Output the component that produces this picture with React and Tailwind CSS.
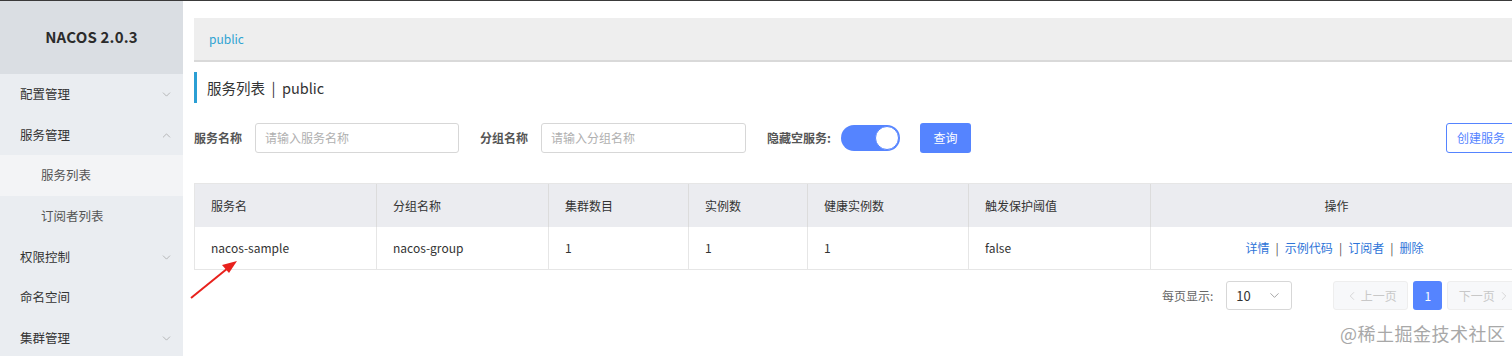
import { ChevronDown, ChevronUp, ChevronLeft, ChevronRight } from "lucide-react";

const font = { fontFamily: '"Noto Sans CJK SC", "Liberation Sans", sans-serif' };

const menu = [
  { label: "配置管理", arrow: "down" },
  { label: "服务管理", arrow: "up" },
  { label: "服务列表", sub: true, active: true },
  { label: "订阅者列表", sub: true },
  { label: "权限控制", arrow: "down" },
  { label: "命名空间" },
  { label: "集群管理", arrow: "down" },
];

const cols = [
  { title: "服务名", w: "w-[182px]", value: "nacos-sample" },
  { title: "分组名称", w: "w-[172px]", value: "nacos-group" },
  { title: "集群数目", w: "w-[140px]", value: "1" },
  { title: "实例数", w: "w-[119px]", value: "1" },
  { title: "健康实例数", w: "w-[161px]", value: "1" },
  { title: "触发保护阈值", w: "w-[182px]", value: "false" },
];

function Sidebar() {
  return (
    <div className="w-[183px] shrink-0 bg-[#eaedf1] h-[355px] flex flex-col">
      <div className="h-[73px] shrink-0 bg-[#dadee3] flex items-center justify-center text-[15px] font-bold text-[#2b2b2b] tracking-[0.2px]">
        NACOS 2.0.3
      </div>
      {menu.map((m) => (
        <div
          key={m.label}
          className={`h-[40.7px] shrink-0 flex items-center justify-between text-[12.5px] ${m.sub ? "pl-[41px] text-[#555]" : "pl-[20px] text-[#333]"} pr-[10px] ${m.active ? "bg-[#f3f4f6]" : ""}`}
        >
          <span>{m.label}</span>
          {m.arrow === "down" && <ChevronDown size={13} strokeWidth={1.2} className="text-[#999]" />}
          {m.arrow === "up" && <ChevronUp size={13} strokeWidth={1.2} className="text-[#999]" />}
        </div>
      ))}
    </div>
  );
}

function Main() {
  return (
    <div className="flex-1 overflow-hidden">
      <div className="w-[1340px] pl-[11px] pt-[17px]">
        <div className="h-[44px] bg-[#eeeeee] border-b-2 border-[#d9d9d9] flex items-center pl-[15px] text-[12px] text-[#2ea3d2]">
          public
        </div>
        <div className="mt-[10px] h-[31px] border-l-[3px] border-[#2b9fd4] flex items-center pl-[10px] text-[14.5px] text-[#333]">
          服务列表&nbsp;&nbsp;|&nbsp;&nbsp;public
        </div>
        <div className="mt-[20px] flex items-center h-[30px] text-[12px] whitespace-nowrap">
          <span className="font-bold text-[#555] w-[61px]">服务名称</span>
          <div className="w-[204px] h-[30px] border border-[#d7d7d7] rounded-[3px] flex items-center pl-[9px] text-[#b0b0b0]">请输入服务名称</div>
          <span className="font-bold text-[#555] ml-[21px] w-[61px]">分组名称</span>
          <div className="w-[205px] h-[30px] border border-[#d7d7d7] rounded-[3px] flex items-center pl-[9px] text-[#b0b0b0]">请输入分组名称</div>
          <span className="font-bold text-[#555] ml-[21px]">隐藏空服务:</span>
          <div className="ml-[10px] w-[59px] h-[26px] rounded-full bg-[#5584ff] relative">
            <div className="absolute right-[1px] top-[1px] w-[24px] h-[24px] rounded-full bg-white border border-[#5584ff]" />
          </div>
          <div className="ml-[20px] w-[51px] h-[30px] rounded-[3px] bg-[#5584ff] text-white flex items-center justify-center">查询</div>
          <div className="ml-auto w-[77px] h-[30px] rounded-[3px] border border-[#5584ff] text-[#5584ff] flex items-center justify-start pl-[10px]">创建服务</div>
        </div>
        <div className="mt-[30px] border border-[#e6e6e6] text-[12px] text-[#333]">
          <div className="flex h-[43px] bg-[#ebecf0]">
            {cols.map((c) => (
              <div key={c.title} className={`${c.w} border-r border-[#dcdcdc] flex items-center pl-[16px]`}>{c.title}</div>
            ))}
            <div className="flex-1 flex items-center justify-center">操作</div>
          </div>
          <div className="flex h-[42px] bg-white">
            {cols.map((c) => (
              <div key={c.title} className={`${c.w} border-r border-[#e6e6e6] flex items-center pl-[16px]`}>{c.value}</div>
            ))}
            <div className="flex-1 flex items-center justify-center text-[#2e74d8] gap-[6px] pr-[4px]">
              <span>详情</span><span className="text-[#555]">|</span>
              <span>示例代码</span><span className="text-[#555]">|</span>
              <span>订阅者</span><span className="text-[#555]">|</span>
              <span>删除</span>
            </div>
          </div>
        </div>
        <div className="mt-[11px] flex items-center text-[12px] pl-[968px] whitespace-nowrap">
          <span className="text-[#666]">每页显示:</span>
          <div className="ml-[13px] w-[66px] h-[29px] border border-[#d7d7d7] rounded-[3px] flex items-center justify-between pl-[9px] pr-[9px] text-[#333] text-[13px]">
            <span>10</span>
            <ChevronDown size={15} strokeWidth={1.2} className="text-[#888]" />
          </div>
          <div className="ml-[41px] w-[75px] h-[29px] border border-[#eeeeee] bg-[#f7f8fa] rounded-[3px] flex items-center justify-center gap-[2px] text-[#c8c8c8]">
            <ChevronLeft size={14} strokeWidth={1.2} />
            <span>上一页</span>
          </div>
          <div className="ml-[5px] w-[29px] h-[29px] rounded-[3px] bg-[#5584ff] text-white flex items-center justify-center">1</div>
          <div className="ml-[5px] w-[75px] h-[29px] border border-[#eeeeee] bg-[#f7f8fa] rounded-[3px] flex items-center justify-center gap-[2px] text-[#c8c8c8]">
            <span>下一页</span>
            <ChevronRight size={14} strokeWidth={1.2} />
          </div>
        </div>
      </div>
    </div>
  );
}

export default function App() {
  return (
    <div className="w-[1512px] h-[356px] bg-white overflow-hidden relative" style={font}>
      <div className="h-[1px] bg-[#3a3a3a]" />
      <div className="flex">
        <Sidebar />
        <Main />
      </div>
      <svg className="absolute left-0 top-0 pointer-events-none" width="1512" height="356">
        <line x1="191" y1="298" x2="228" y2="268" stroke="#e8211c" strokeWidth="2" />
        <polygon points="237,261 222,265 229,273" fill="#e8211c" />
      </svg>
      <div className="absolute left-[1340px] top-[320px] text-[18px] text-[#a8a8a8] tracking-[0.5px]">@稀土掘金技术社区</div>
    </div>
  );
}
